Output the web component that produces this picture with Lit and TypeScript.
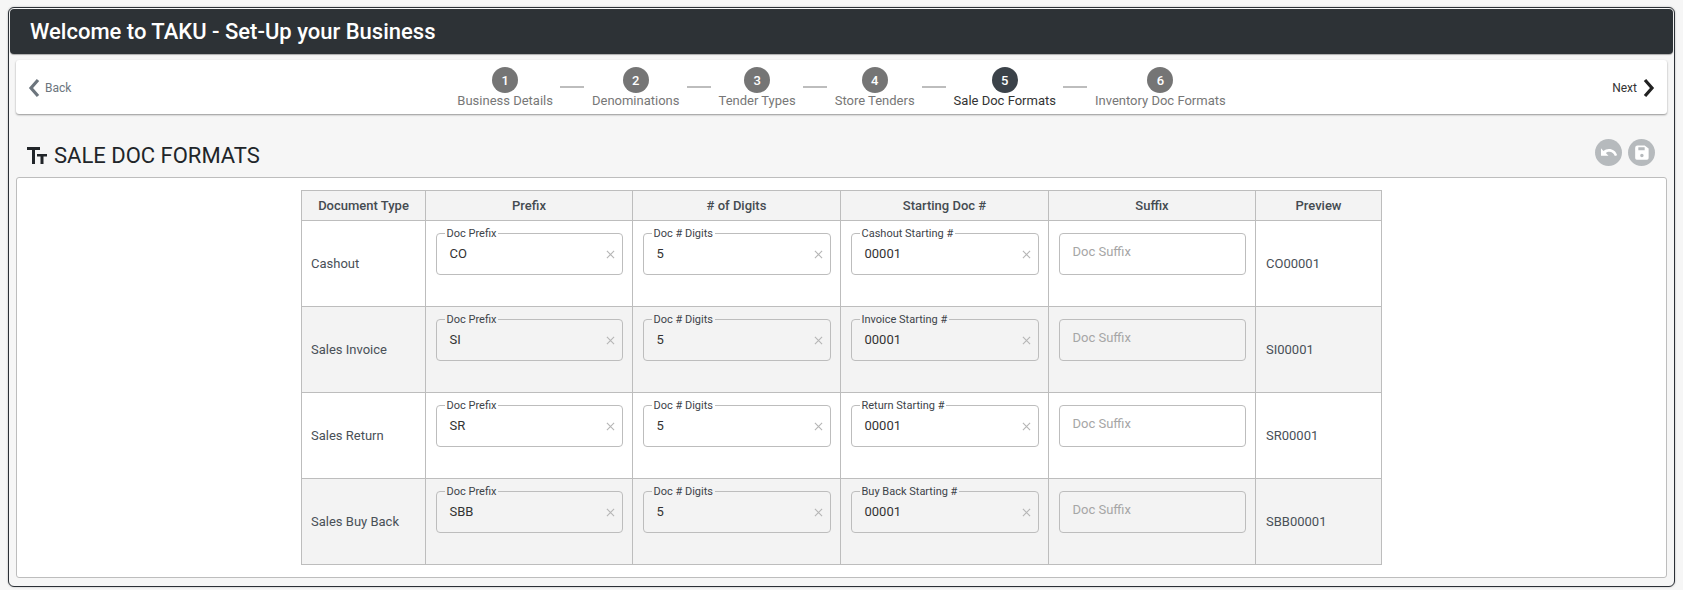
import { LitElement, html, css } from "lit";
import { customElement } from "lit/decorators.js";

const STEPS = ["Business Details", "Denominations", "Tender Types", "Store Tenders", "Sale Doc Formats", "Inventory Doc Formats"];
const ROWS = [
  { name: "Cashout", prefix: "CO", start: "Cashout Starting #", preview: "CO00001" },
  { name: "Sales Invoice", prefix: "SI", start: "Invoice Starting #", preview: "SI00001" },
  { name: "Sales Return", prefix: "SR", start: "Return Starting #", preview: "SR00001" },
  { name: "Sales Buy Back", prefix: "SBB", start: "Buy Back Starting #", preview: "SBB00001" },
];

const field = (label: string, value: string) => html`
  <div class="field">
    <span class="flabel">${label}</span>
    <span class="fvalue">${value}</span>
    <svg class="clear" viewBox="0 0 10 10"><path d="M1 1L9 9M9 1L1 9" /></svg>
  </div>`;

@customElement("app-root")
export class AppRoot extends LitElement {
  static styles = css`
    :host { display: block; padding: 7px 8px 3px; font-family: Roboto, "Liberation Sans", sans-serif; background: #f6f6f6; color: #333; box-sizing: border-box; height: 590px; }
    * { box-sizing: border-box; }
    .frame { height: 580px; border: 1px solid #2b3036; border-radius: 6px; background: #f6f6f6; padding: 1px 1px 0; box-shadow: 0 0 2px rgba(0,0,0,.3); }
    .top { height: 45px; background: #2d3236; border-radius: 4px; color: #fff; font-size: 22px; font-weight: 500; display: flex; align-items: center; padding-left: 20px; box-shadow: 0 1px 1px rgba(0,0,0,.3); }
    .content { padding: 6px 6px 0 6px; }
    .bar { height: 54px; background: #fff; border-radius: 3px; box-shadow: 0 1px 2px rgba(0,0,0,.4); display: flex; align-items: center; justify-content: space-between; padding: 2px 12px 0; position: relative; }
    .nav { display: flex; align-items: center; font-size: 12px; gap: 5px; color: #6c757d; }
    .nav.next { color: #333; gap: 6px; }
    .nav svg { width: 12px; height: 20px; display: block; }
    .steps { display: flex; align-items: flex-start; position: absolute; left: 0; right: 0; justify-content: center; top: 7px; }
    .step { display: flex; flex-direction: column; align-items: center; font-size: 13px; color: #777; }
    .step .num { width: 26px; height: 26px; border-radius: 50%; background: #757575; color: #fff; font-size: 13px; font-weight: 500; display: flex; align-items: center; justify-content: center; }
    .step .lab { line-height: 16px; margin-top: 0; white-space: nowrap; }
    .step.active .num { background: #3b4249; }
    .step.active .lab { color: #333; }
    .line { width: 24px; height: 2px; background: #bdbdbd; margin: 19px 7.5px 0; }
    .head { height: 63px; display: flex; align-items: center; justify-content: space-between; padding: 19px 12px 0 11px; }
    .ttl { display: flex; align-items: center; gap: 7px; font-size: 22px; color: #212529; }
    .ttl svg { width: 20px; height: 17px; display: block; }
    .actions { display: flex; gap: 6.5px; margin-bottom: 6px; }
    .round { width: 27px; height: 27px; border-radius: 50%; background: #b6babd; display: flex; align-items: center; justify-content: center; }
    .round svg { width: 19px; height: 19px; display: block; }
    .card { height: 401px; background: #fff; border: 1px solid #bdbdbd; border-radius: 3px; display: flex; justify-content: center; padding-top: 12px; }
    table { width: 1081px; height: 375px; table-layout: fixed; border-collapse: collapse; font-size: 13px; color: #495057; align-self: flex-start; }
    th, td { border: 1px solid #bdbdbd; padding: 0 9.5px; }
    th { height: 30px; background: #f3f3f3; font-weight: 500; color: #454b51; text-align: center; padding: 0; }
    td { height: 86px; vertical-align: top; background: #fff; }
    td.txt { vertical-align: middle; padding-left: 9px; }
    td.prev { padding-left: 10px; }
    tr.alt td { background: #f3f3f3; }
    .field { position: relative; height: 42px; margin-top: 12px; border: 1px solid #bdbdbd; border-radius: 4px; background: inherit; }
    .flabel { position: absolute; left: 8px; top: -6px; font-size: 11px; line-height: 12px; padding: 0 2px; background: #fff; white-space: nowrap; color: #3d4349; }
    tr.alt .flabel { background: #f3f3f3; }
    .fvalue { position: absolute; left: 13px; top: 11px; line-height: 17px; color: #333; }
    .ph { position: absolute; left: 13px; top: 9px; line-height: 17px; color: #a6a6a6; }
    .clear { position: absolute; right: 7px; top: 16px; width: 9px; height: 9px; stroke: #b5b5b5; stroke-width: 1.2; fill: none; }
  `;

  render() {
    return html`
      <div class="frame">
        <div class="top">Welcome to TAKU - Set-Up your Business</div>
        <div class="content">
          <div class="bar">
            <div class="nav">
              <svg viewBox="0 0 12 20"><path d="M10 2L3 10L10 18" fill="none" stroke="#6c757d" stroke-width="3.2"/></svg>
              <span>Back</span>
            </div>
            <div class="steps">
              ${STEPS.map((s, i) => html`
                ${i > 0 ? html`<div class="line"></div>` : ""}
                <div class="step ${i === 4 ? "active" : ""}"><div class="num">${i + 1}</div><div class="lab">${s}</div></div>`)}
            </div>
            <div class="nav next">
              <span>Next</span>
              <svg viewBox="0 0 12 20"><path d="M2 2L9 10L2 18" fill="none" stroke="#222" stroke-width="3.2"/></svg>
            </div>
          </div>
          <div class="head">
            <div class="ttl">
              <svg viewBox="0 0 20 17"><path fill="#212529" d="M0 0H13V3H8V17H5V3H0Z M10 7H20V9.5H16.5V17H13.5V9.5H10Z"/></svg>
              <span>SALE DOC FORMATS</span>
            </div>
            <div class="actions">
              <div class="round"><svg viewBox="0 0 24 24"><path fill="#fff" d="M12.5 7.5c-2.65 0-5.05 1-6.9 2.6L2.5 6.5v9.5h9.5l-3.4-3.4c1.2-.9 2.7-1.6 4.4-1.6 3.2 0 5.9 2.1 7 5.5l2.9-1C21.6 10.5 17.5 7.5 12.5 7.5z"/></svg></div>
              <div class="round"><svg viewBox="0 0 24 24"><path fill="#fff" fill-rule="evenodd" d="M7 3H16L21 7V19a2 2 0 0 1-2 2H6a2 2 0 0 1-2-2V6a3 3 0 0 1 3-3Z M8 5.5V9H16V5.5Z M12.5 13.5a2.2 2.2 0 1 0 0 4.4a2.2 2.2 0 1 0 0-4.4Z"/></svg></div>
            </div>
          </div>
          <div class="card">
            <table>
              <colgroup><col style="width:124px"/><col style="width:207px"/><col style="width:208px"/><col style="width:208px"/><col style="width:207px"/><col style="width:126px"/></colgroup>
              <thead><tr><th>Document Type</th><th>Prefix</th><th># of Digits</th><th>Starting Doc #</th><th>Suffix</th><th>Preview</th></tr></thead>
              <tbody>
                ${ROWS.map((r, i) => html`
                  <tr class=${i % 2 ? "alt" : ""}>
                    <td class="txt">${r.name}</td>
                    <td>${field("Doc Prefix", r.prefix)}</td>
                    <td>${field("Doc # Digits", "5")}</td>
                    <td>${field(r.start, "00001")}</td>
                    <td><div class="field"><span class="ph">Doc Suffix</span></div></td>
                    <td class="txt prev">${r.preview}</td>
                  </tr>`)}
              </tbody>
            </table>
          </div>
        </div>
      </div>`;
  }
}
